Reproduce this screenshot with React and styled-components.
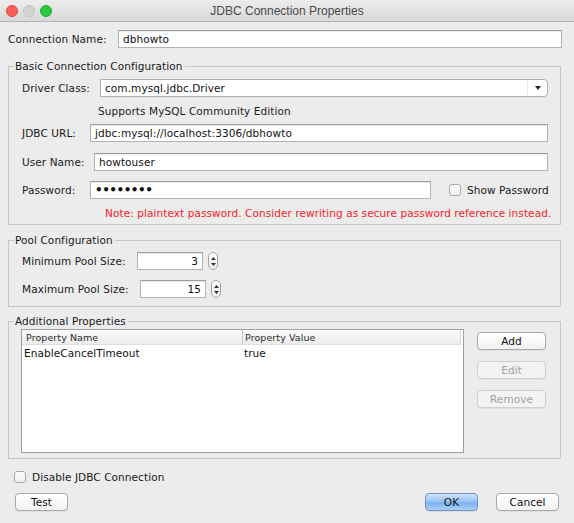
import React from "react";
import styled, { createGlobalStyle } from "styled-components";

const GlobalStyle = createGlobalStyle`
  html, body {
    margin: 0;
    padding: 0;
    background: #ececec;
  }
  body {
    font-family: "DejaVu Sans", "Lucida Grande", sans-serif;
    font-size: 10.5px;
    letter-spacing: 0.08px;
    color: #1c1c1c;
  }
`;

const Window = styled.div`
  width: 574px;
  height: 523px;
  background: #ececec;
  display: flex;
  flex-direction: column;
  overflow: hidden;
`;

const TitleBar = styled.div`
  height: 22px;
  flex: none;
  box-sizing: border-box;
  display: grid;
  grid-template-columns: 70px 1fr 70px;
  align-items: center;
  background: linear-gradient(#ededed, #d8d8d8);
  border-bottom: 1px solid #b5b5b5;
`;

const Lights = styled.div`
  display: flex;
  gap: 5px;
  padding-left: 6px;
`;

const Light = styled.span`
  width: 12px;
  height: 12px;
  border-radius: 50%;
  box-sizing: border-box;
  background: ${(p) => p.$color};
  border: 1px solid ${(p) => p.$edge};
`;

const Title = styled.div`
  text-align: center;
  font-family: "Liberation Sans", Arial, sans-serif;
  font-size: 12px;
  letter-spacing: 0;
  color: #4a4a4a;
`;

const Body = styled.div`
  flex: 1;
  display: flex;
  flex-direction: column;
  padding: 0 12px 0 8px;
`;

const Row = styled.div`
  display: flex;
  align-items: center;
  height: ${(p) => p.$h || 18}px;
  margin-top: ${(p) => p.$mt || 0}px;
  padding-left: ${(p) => p.$pl || 0}px;
  white-space: nowrap;
`;

const Label = styled.label`
  flex: none;
  width: ${(p) => p.$w}px;
  color: #1a1a1a;
`;

const Input = styled.div`
  flex: ${(p) => (p.$w ? "none" : "1")};
  width: ${(p) => (p.$w ? `${p.$w}px` : "auto")};
  height: 18px;
  box-sizing: border-box;
  background: #fff;
  border: 1px solid #b2b2b2;
  border-top-color: #9c9c9c;
  box-shadow: inset 0 1px 0 #ececec;
  display: flex;
  align-items: center;
  justify-content: ${(p) => (p.$right ? "flex-end" : "flex-start")};
  padding: 0 4px;
  color: #111;
  overflow: hidden;
`;

const Dots = styled.span`
  font-size: 12px;
  font-weight: bold;
  letter-spacing: -0.5px;
  color: #111;
`;

const Combo = styled.div`
  flex: 1;
  height: 18px;
  box-sizing: border-box;
  display: flex;
  background: #fff;
  border: 1px solid #b0b0b0;
  border-radius: 0 4px 4px 0;
  box-shadow: 0 1px 0 rgba(0, 0, 0, 0.04);
`;

const ComboText = styled.div`
  flex: 1;
  display: flex;
  align-items: center;
  padding-left: 4px;
  color: #111;
`;

const ComboArrow = styled.div`
  width: 19px;
  display: flex;
  align-items: center;
  justify-content: center;
  border-left: 1px solid #ededed;
`;

const Group = styled.fieldset`
  margin: ${(p) => p.$mt}px 1px 0 0;
  padding: ${(p) => p.$pad};
  border: 1px solid #c7c7c7;
  min-width: 0;
`;

const Legend = styled.legend`
  margin-left: ${(p) => p.$ml || -8}px;
  padding: 0 2px 0 1px;
  line-height: 14px;
  color: #1a1a1a;
`;

const Info = styled.span`
  color: #1c1c1c;
`;

const Warning = styled.span`
  color: #f4222a;
`;

const Box = styled.span`
  width: 12px;
  height: 12px;
  flex: none;
  box-sizing: border-box;
  border: 1px solid #a8a8a8;
  border-radius: 3px;
  background: linear-gradient(#ffffff, #f0f0f0);
  margin-right: 6px;
`;

const CheckLabel = styled.span`
  display: inline-flex;
  align-items: center;
  margin-left: ${(p) => p.$ml || 0}px;
  color: #1a1a1a;
`;

const SpinCap = styled.div`
  width: 10px;
  height: 18px;
  flex: none;
  box-sizing: border-box;
  margin-left: 5px;
  border: 1px solid #a6a6a6;
  border-radius: 5px;
  background: linear-gradient(#ffffff, #efefef);
  display: flex;
  flex-direction: column;
  align-items: center;
  justify-content: center;
  gap: 3px;
`;

const PropsArea = styled.div`
  display: flex;
  gap: 13px;
  align-items: flex-start;
`;

const Table = styled.div`
  flex: 1;
  height: 124px;
  box-sizing: border-box;
  background: #fff;
  border: 1px solid #9f9f9f;
  display: flex;
  flex-direction: column;
`;

const HeaderRow = styled.div`
  display: grid;
  grid-template-columns: 220px 1fr;
  height: 14px;
  background: linear-gradient(#fbfbfb, #ececec);
  border-bottom: 1px solid #dedede;
  margin-right: 2px;
  border-right: 1px solid #d6d6d6;
  font-size: 9.5px;
  color: #2a2a2a;
`;

const HeaderCell = styled.div`
  display: flex;
  align-items: center;
  padding-left: ${(p) => (p.$first ? 4 : 2)}px;
  border-left: ${(p) => (p.$first ? "none" : "1px solid #c9c9c9")};
`;

const DataRow = styled.div`
  display: grid;
  grid-template-columns: 221px 1fr;
  height: 15px;
  align-items: center;
  color: #111;
`;

const DataCell = styled.div`
  padding-left: ${(p) => (p.$first ? 2 : 1)}px;
`;

const ButtonCol = styled.div`
  width: 69px;
  flex: none;
  display: flex;
  flex-direction: column;
  gap: 11px;
  margin-top: 3px;
`;

const Button = styled.button`
  height: 18px;
  width: ${(p) => (p.$w ? `${p.$w}px` : "100%")};
  box-sizing: border-box;
  padding: 0;
  font-family: inherit;
  font-size: 10.5px;
  letter-spacing: inherit;
  border-radius: 4px;
  border: 1px solid ${(p) => (p.$primary ? "#6f93c9" : p.disabled ? "#d0d0d0" : "#a9a9a9")};
  background: ${(p) =>
    p.$primary
      ? "linear-gradient(#cde2fb, #9bc6f6 45%, #7cb2f0 55%, #a9d0fa)"
      : p.disabled
      ? "#f3f3f3"
      : "linear-gradient(#ffffff, #f2f2f2)"};
  color: ${(p) => (p.disabled ? "#a2a2a2" : "#111")};
  box-shadow: 0 1px 0 rgba(0, 0, 0, 0.05);
`;

const Footer = styled.div`
  display: flex;
  align-items: center;
  gap: 18px;
  margin-top: 9px;
  padding: 0 3px 0 7px;
`;

const Spacer = styled.div`
  flex: 1;
  margin-right: -18px;
`;

const Arrow = ({ up }) => (
  <svg width="5" height="3" viewBox="0 0 5 3">
    <path d={up ? "M0 3 L2.5 0 L5 3 Z" : "M0 0 L5 0 L2.5 3 Z"} fill="#333" />
  </svg>
);

const Spinner = ({ label, labelWidth, value }) => (
  <>
    <Label $w={labelWidth}>{label}</Label>
    <Input $w={66} $right>
      {value}
    </Input>
    <SpinCap>
      <Arrow up />
      <Arrow />
    </SpinCap>
  </>
);

export default function App() {
  return (
    <>
      <GlobalStyle />
      <Window>
        <TitleBar>
          <Lights>
            <Light $color="#fc5f57" $edge="#e0443e" />
            <Light $color="#d3d3d3" $edge="#c4c4c4" />
            <Light $color="#2bc841" $edge="#1ea933" />
          </Lights>
          <Title>JDBC Connection Properties</Title>
          <div />
        </TitleBar>
        <Body>
          <Row $mt={8}>
            <Label $w={110}>Connection Name:</Label>
            <Input>dbhowto</Input>
          </Row>

          <Group $mt={11} $pad="6px 12px 4px 13px">
            <Legend>Basic Connection Configuration</Legend>
            <Row>
              <Label $w={78}>Driver Class:</Label>
              <Combo>
                <ComboText>com.mysql.jdbc.Driver</ComboText>
                <ComboArrow>
                  <svg width="6" height="4" viewBox="0 0 6 4">
                    <path d="M0 0 L6 0 L3 4 Z" fill="#222" />
                  </svg>
                </ComboArrow>
              </Combo>
            </Row>
            <Row $h={14} $mt={7} $pl={76}>
              <Info>Supports MySQL Community Edition</Info>
            </Row>
            <Row $mt={6}>
              <Label $w={68}>JDBC URL:</Label>
              <Input>jdbc:mysql://localhost:3306/dbhowto</Input>
            </Row>
            <Row $mt={11}>
              <Label $w={72}>User Name:</Label>
              <Input>howtouser</Input>
            </Row>
            <Row $mt={10}>
              <Label $w={68}>Password:</Label>
              <Input $w={341}>
                <Dots>••••••••</Dots>
              </Input>
              <CheckLabel $ml={18}>
                <Box />
                Show Password
              </CheckLabel>
            </Row>
            <Row $h={14} $mt={7} $pl={83}>
              <Warning>
                Note: plaintext password. Consider rewriting as secure password reference instead.
              </Warning>
            </Row>
          </Group>

          <Group $mt={8} $pad="5px 12px 8px 13px">
            <Legend>Pool Configuration</Legend>
            <Row>
              <Spinner label="Minimum Pool Size:" labelWidth={115} value="3" />
            </Row>
            <Row $mt={10}>
              <Spinner label="Maximum Pool Size:" labelWidth={118} value="15" />
            </Row>
          </Group>

          <Group $mt={7} $pad="1px 14px 5px 12px">
            <Legend $ml={-7}>Additional Properties</Legend>
            <PropsArea>
              <Table>
                <HeaderRow>
                  <HeaderCell $first>Property Name</HeaderCell>
                  <HeaderCell>Property Value</HeaderCell>
                </HeaderRow>
                <DataRow>
                  <DataCell $first>EnableCancelTimeout</DataCell>
                  <DataCell>true</DataCell>
                </DataRow>
              </Table>
              <ButtonCol>
                <Button>Add</Button>
                <Button disabled>Edit</Button>
                <Button disabled>Remove</Button>
              </ButtonCol>
            </PropsArea>
          </Group>

          <Row $h={14} $mt={11} $pl={6}>
            <CheckLabel>
              <Box />
              Disable JDBC Connection
            </CheckLabel>
          </Row>

          <Footer>
            <Button $w={53}>Test</Button>
            <Spacer />
            <Button $w={53} $primary>
              OK
            </Button>
            <Button $w={63}>Cancel</Button>
          </Footer>
        </Body>
      </Window>
    </>
  );
}
